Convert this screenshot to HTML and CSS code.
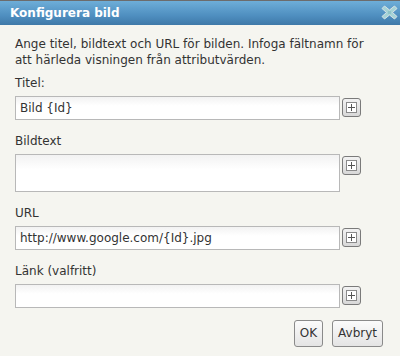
FILE: index.html
```html
<!DOCTYPE html>
<html>
<head>
<meta charset="utf-8">
<link rel="stylesheet" href="styles.css">
</head>
<body>
<div class="dialog">
  <div class="titlebar">
    <span class="title">Konfigurera bild</span>
    <svg class="close" width="17" height="15" viewBox="0 0 17 15">
      <path d="M3.5 1 L8.5 5 L13.5 1 L16 3.5 L11.5 7.5 L16 11.5 L13.5 14 L8.5 10 L3.5 14 L1 11.5 L5.5 7.5 L1 3.5 Z" fill="#a6d3d6" stroke="#d9e4e6" stroke-width="1" stroke-linejoin="round"/>
      <rect x="7" y="6" width="3" height="3" fill="#8fc4c8"/>
    </svg>
  </div>
  <div class="content">
    <p class="intro">Ange titel, bildtext och URL för bilden. Infoga fältnamn för att härleda visningen från attributvärden.</p>
    <div class="field">
      <div class="label">Titel:</div>
      <div class="row">
        <div class="box">Bild {Id}</div>
        <div class="plus"><span class="plus-inner"></span></div>
      </div>
    </div>
    <div class="field">
      <div class="label">Bildtext</div>
      <div class="row">
        <div class="box area"></div>
        <div class="plus"><span class="plus-inner"></span></div>
      </div>
    </div>
    <div class="field">
      <div class="label">URL</div>
      <div class="row">
        <div class="box">http://www.google.com/{Id}.jpg</div>
        <div class="plus"><span class="plus-inner"></span></div>
      </div>
    </div>
    <div class="field">
      <div class="label">Länk (valfritt)</div>
      <div class="row">
        <div class="box"></div>
        <div class="plus"><span class="plus-inner"></span></div>
      </div>
    </div>
    <div class="actions">
      <div class="btn ok">OK</div>
      <div class="btn">Avbryt</div>
    </div>
  </div>
</div>
</body>
</html>
```

FILE: styles.css
```css
html, body {
  margin: 0;
  padding: 0;
  background: #f5f5f0;
}
.dialog {
  width: 400px;
  height: 356px;
  background: #f5f5f0;
  font-family: "DejaVu Sans", Verdana, sans-serif;
  font-size: 12px;
  color: #333;
}
.titlebar {
  height: 24px;
  border-top: 1px solid #6c6c6c;
  background: linear-gradient(#6eaed8, #4f8fc0 60%, #3f79a8);
  display: flex;
  align-items: center;
  justify-content: space-between;
  padding: 0 2px 0 10px;
}
.title {
  color: #fff;
  font-weight: bold;
  font-size: 12px;
}
.close {
  display: block;
  margin-top: -1px;
}
.content {
  padding: 11px 17px 0 15px;
}
.intro {
  margin: 0 0 7px 0;
  line-height: 16px;
}
.field {
  margin-bottom: 13px;
}
.label {
  line-height: 16px;
  margin-bottom: 5px;
}
.row {
  display: flex;
  align-items: flex-start;
  gap: 2px;
}
.box {
  box-sizing: border-box;
  width: 325px;
  height: 24px;
  border: 1px solid #b8b8b8;
  background: linear-gradient(#f2f2f2, #ffffff 40%);
  padding: 0 4px;
  line-height: 22px;
  color: #333;
}
.box.area {
  height: 38px;
}
.plus {
  box-sizing: border-box;
  width: 19px;
  height: 19px;
  margin-top: 2px;
  border: 1px solid #7a7a7a;
  border-radius: 3px;
  background: linear-gradient(#f2f2f2, #d8d8d8);
  display: flex;
  align-items: center;
  justify-content: center;
}
.plus-inner {
  box-sizing: border-box;
  width: 11px;
  height: 11px;
  border: 1px solid #8a8a8a;
  background: #fff;
  position: relative;
}
.plus-inner::before, .plus-inner::after {
  content: "";
  position: absolute;
  background: #555;
}
.plus-inner::before {
  left: 1px;
  right: 1px;
  top: 4px;
  height: 1px;
}
.plus-inner::after {
  top: 1px;
  bottom: 1px;
  left: 4px;
  width: 1px;
}
.actions {
  display: flex;
  justify-content: flex-end;
  gap: 9px;
  margin-top: -1px;
}
.btn {
  box-sizing: border-box;
  height: 27px;
  padding: 0 5px;
  border: 1px solid #8a8a8a;
  border-radius: 3px;
  background: linear-gradient(#fbfbfb, #e4e4e4);
  line-height: 25px;
  font-size: 12px;
  color: #333;
}
```
